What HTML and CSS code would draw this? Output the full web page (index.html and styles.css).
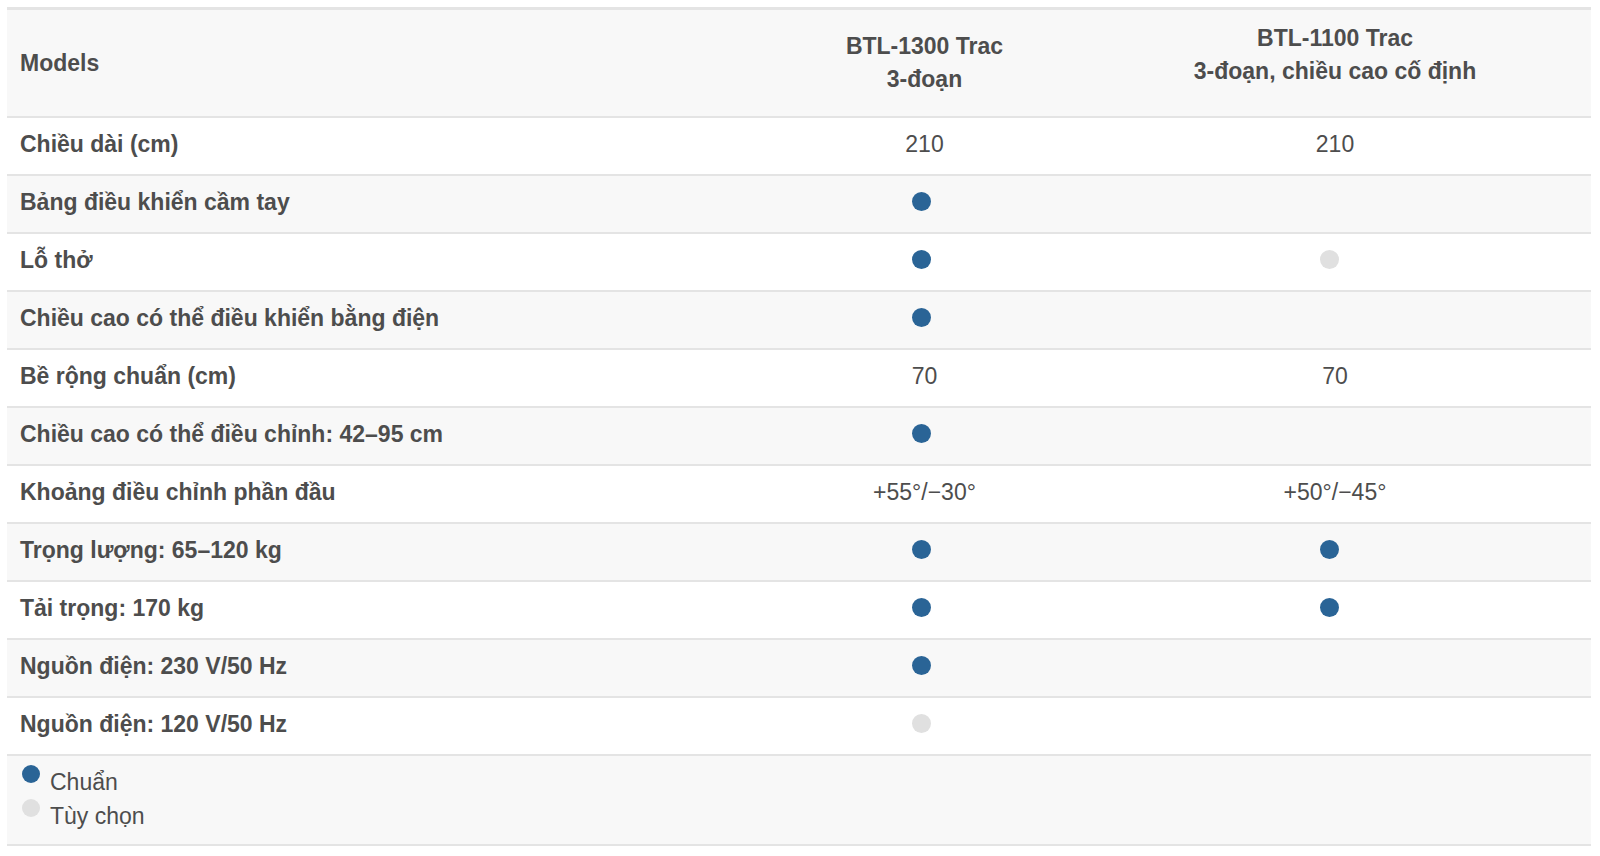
FILE: index.html
```html
<!DOCTYPE html>
<html lang="vi">
<head>
<meta charset="utf-8">
<title>BTL Trac</title>
<link rel="stylesheet" href="styles.css">
</head>
<body>
<table class="spec">
  <colgroup>
    <col class="c-label">
    <col class="c-m1">
    <col class="c-m2">
  </colgroup>
  <thead>
    <tr class="head">
      <th class="label">Models</th>
      <th class="m1">BTL-1300 Trac<br>3-đoạn</th>
      <th class="m2">BTL-1100 Trac<br>3-đoạn, chiều cao cố định</th>
    </tr>
  </thead>
  <tbody>
    <tr class="odd"><td class="label">Chiều dài (cm)</td><td class="val">210</td><td class="val">210</td></tr>
    <tr class="even"><td class="label">Bảng điều khiển cầm tay</td><td class="val"><span class="dot std"></span></td><td class="val"></td></tr>
    <tr class="odd"><td class="label">Lỗ thở</td><td class="val"><span class="dot std"></span></td><td class="val"><span class="dot opt"></span></td></tr>
    <tr class="even"><td class="label">Chiều cao có thể điều khiển bằng điện</td><td class="val"><span class="dot std"></span></td><td class="val"></td></tr>
    <tr class="odd"><td class="label">Bề rộng chuẩn (cm)</td><td class="val">70</td><td class="val">70</td></tr>
    <tr class="even"><td class="label">Chiều cao có thể điều chỉnh: 42–95 cm</td><td class="val"><span class="dot std"></span></td><td class="val"></td></tr>
    <tr class="odd"><td class="label">Khoảng điều chỉnh phần đầu</td><td class="val">+55°/−30°</td><td class="val">+50°/−45°</td></tr>
    <tr class="even"><td class="label">Trọng lượng: 65–120 kg</td><td class="val"><span class="dot std"></span></td><td class="val"><span class="dot std"></span></td></tr>
    <tr class="odd"><td class="label">Tải trọng: 170 kg</td><td class="val"><span class="dot std"></span></td><td class="val"><span class="dot std"></span></td></tr>
    <tr class="even"><td class="label">Nguồn điện: 230 V/50 Hz</td><td class="val"><span class="dot std"></span></td><td class="val"></td></tr>
    <tr class="odd"><td class="label">Nguồn điện: 120 V/50 Hz</td><td class="val"><span class="dot opt"></span></td><td class="val"></td></tr>
  </tbody>
  <tfoot>
    <tr class="legend">
      <td colspan="3">
        <div class="legend-line"><span class="dot std ldot"></span>Chuẩn</div>
        <div class="legend-line"><span class="dot opt ldot"></span>Tùy chọn</div>
      </td>
    </tr>
  </tfoot>
</table>
</body>
</html>
```

FILE: styles.css
```css
html, body {
  margin: 0;
  padding: 0;
  background: #ffffff;
}

body {
  padding: 7px 9px 0 7px;
  font-family: "Liberation Sans", Arial, Helvetica, sans-serif;
  color: #4d4d4d;
}

.spec {
  width: 1584px;
  border-collapse: separate;
  border-spacing: 0;
  table-layout: fixed;
  border-top: 3px solid #e4e4e4;
}

.c-label { width: 763px; }
.c-m1 { width: 310px; }
.c-m2 { width: 511px; }

.spec th,
.spec td {
  padding: 0 14px 0 13px;
  border-bottom: 2px solid #e4e4e4;
  font-size: 23px;
}

.head th {
  background: #f8f8f8;
  height: 106px;
  line-height: 33px;
  font-weight: bold;
  vertical-align: middle;
}

.head th.label {
  text-align: left;
}

.head th.m1,
.head th.m2 {
  text-align: center;
}

.head th.m2 {
  padding-bottom: 16px;
  height: 90px;
}

.spec tbody td {
  line-height: 52px;
  padding-bottom: 4px;
  white-space: nowrap;
}

.spec tbody tr.odd td { background: #ffffff; }
.spec tbody tr.even td { background: #f8f8f8; }

.spec td.label {
  font-weight: bold;
  text-align: left;
}

.spec td.val {
  text-align: center;
  font-weight: normal;
}

.dot {
  display: inline-block;
  width: 19px;
  height: 19px;
  border-radius: 50%;
  vertical-align: -1px;
  margin-right: 7px;
}

.spec td.val + td.val .dot {
  margin-right: 11px;
}

.dot.std { background: #2a6496; }
.dot.opt { background: #e0e0e0; }

.legend td {
  background: #f8f8f8;
  padding: 9px 15px 11px 15px;
  line-height: 33px;
  font-size: 23px;
}

.legend-line {
  white-space: nowrap;
}

.dot.ldot {
  width: 18px;
  height: 18px;
  vertical-align: 7px;
  margin-right: 10px;
}
```
